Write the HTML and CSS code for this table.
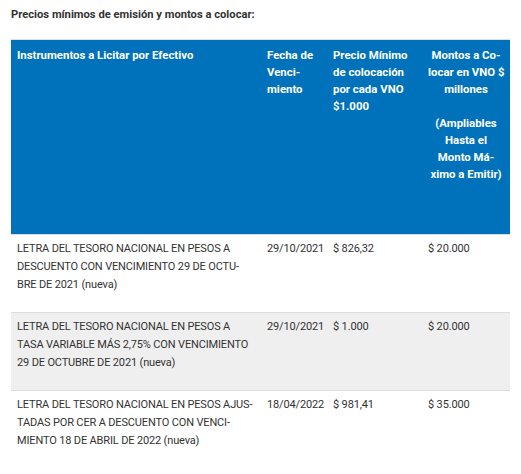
FILE: index.html
```html
<!DOCTYPE html>
<html lang="es">
<head>
<meta charset="utf-8">
<link rel="stylesheet" href="styles.css">
</head>
<body>
<p class="title">Precios mínimos de emisión y montos a colocar:</p>
<table class="tbl">
  <thead>
    <tr>
      <th class="c1">Instrumentos a Licitar por Efectivo</th>
      <th class="c2">Fecha de Venci&shy;miento</th>
      <th class="c3">Precio Mínimo de colocación por cada VNO $1.000</th>
      <th class="c4">Montos a Co-<br>locar en VNO $<br>millones<br><br>(Ampliables<br>Hasta el<br>Monto Má-<br>ximo a Emitir)</th>
    </tr>
  </thead>
  <tbody>
    <tr>
      <td>LETRA DEL TESORO NACIONAL EN PESOS A DESCUENTO CON VENCIMIENTO 29 DE OCTU&shy;BRE DE 2021 (nueva)</td>
      <td>29/10/2021</td>
      <td>$ 826,32</td>
      <td class="amt">$ 20.000</td>
    </tr>
    <tr class="alt">
      <td>LETRA DEL TESORO NACIONAL EN PESOS A TASA VARIABLE MÁS 2,75% CON VENCIMIENTO 29 DE OCTUBRE DE 2021 (nueva)</td>
      <td>29/10/2021</td>
      <td>$ 1.000</td>
      <td class="amt">$ 20.000</td>
    </tr>
    <tr>
      <td>LETRA DEL TESORO NACIONAL EN PESOS AJUS&shy;TADAS POR CER A DESCUENTO CON VENCI&shy;MIENTO 18 DE ABRIL DE 2022 (nueva)</td>
      <td>18/04/2022</td>
      <td>$ 981,41</td>
      <td class="amt">$ 35.000</td>
    </tr>
  </tbody>
</table>
</body>
</html>
```
FILE: styles.css
```css
html, body {
  margin: 0;
  padding: 0;
  background: #fff;
}
body {
  padding: 0 11px;
  font-family: Roboto, "Liberation Sans", sans-serif;
  color: #333;
}
.title {
  margin: 7px 0 0 0;
  font-size: 11.2px;
  font-weight: 700;
  line-height: 16px;
  color: #333;
}
.tbl {
  margin-top: 16px;
  width: 499px;
  border-collapse: collapse;
  table-layout: fixed;
  border-top: 1px solid #dedede;
}
.tbl th {
  background: #0072bb;
  color: #fff;
  font-size: 11.4px;
  font-weight: 700;
  line-height: 17px;
  text-align: left;
  vertical-align: top;
  padding: 7px 6px 51px 6px;
}
.tbl th.c4 {
  text-align: center;
  white-space: nowrap;
}
.c1 { width: 238px; }
.c2 { width: 54px; }
.c3 { width: 83px; }
.c4 { width: 76px; }
.tbl td {
  font-size: 11px;
  line-height: 18px;
  letter-spacing: -0.15px;
  vertical-align: top;
  padding: 5px 6px 18px 6px;
  border-top: 1px solid #dcdcdc;
  color: #333;
}
.tbl tr.alt td {
  background: #efefef;
}
```
